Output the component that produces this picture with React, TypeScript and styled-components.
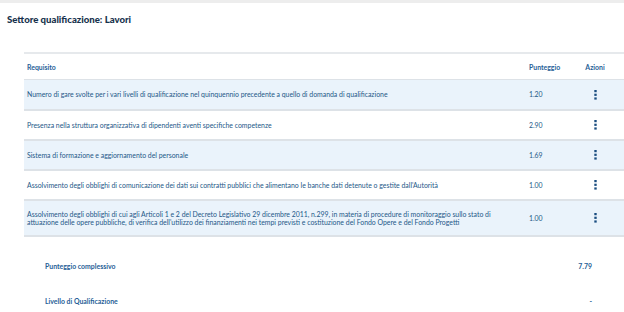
import styled, { createGlobalStyle } from 'styled-components'

const GlobalStyle = createGlobalStyle`
  html, body {
    margin: 0;
    padding: 0;
    background: #ffffff;
  }
  body {
    font-family: Lato, 'Open Sans', sans-serif;
  }
`

const Page = styled.div`
  width: 624px;
  height: 312px;
  overflow: hidden;
  border-top: 3px solid #ededed;
  box-sizing: border-box;
`

const Title = styled.h1`
  margin: 0;
  padding: 10px 0 0 7px;
  font-size: 9.6px;
  line-height: 13px;
  font-weight: 900;
  color: #17324d;
`

const TableWrap = styled.div`
  margin: 26px 0 0 24px;
`

const Table = styled.table`
  width: 100%;
  border-collapse: collapse;
  border-top: 2px solid #e6e9ec;
  font-size: 6.9px;
`

const HeadCell = styled.th<{ $align?: 'left' | 'center' }>`
  height: 25px;
  padding: 0 3px;
  text-align: ${(p) => p.$align ?? 'left'};
  font-weight: 700;
  color: #1f5e96;
  border-bottom: 1px solid #dde2e7;
`

const Row = styled.tr<{ $shaded: boolean }>`
  background: ${(p) => (p.$shaded ? '#eaf3fb' : '#ffffff')};
  border-bottom: 2px solid #dde2e7;
`

const Cell = styled.td<{ $height: number }>`
  height: ${(p) => p.$height}px;
  padding: 0 3px;
  color: #245888;
  line-height: 8.5px;
`

const ScoreCell = styled(Cell)`
  width: 34px;
`

const ActionCell = styled(Cell)`
  width: 52px;
  text-align: center;
`

const Kebab = () => (
  <svg width="3" height="10" viewBox="0 0 3 10" style={{ display: 'block', margin: '0 auto' }}>
    <rect x="0.3" y="0" width="2.4" height="2.2" fill="#1a4d80" />
    <rect x="0.3" y="3.7" width="2.4" height="2.2" fill="#1a4d80" />
    <rect x="0.3" y="7.4" width="2.4" height="2.2" fill="#1a4d80" />
  </svg>
)

const Summary = styled.div`
  margin: 25px 32px 0 45px;
  display: flex;
  flex-direction: column;
  gap: 27px;
`

const SummaryRow = styled.div`
  display: flex;
  justify-content: space-between;
  font-size: 6.9px;
  font-weight: 700;
  color: #1f5e96;
`

const rows = [
  {
    text: 'Numero di gare svolte per i vari livelli di qualificazione nel quinquennio precedente a quello di domanda di qualificazione',
    score: '1.20',
    height: 29,
  },
  {
    text: 'Presenza nella struttura organizzativa di dipendenti aventi specifiche competenze',
    score: '2.90',
    height: 28,
  },
  {
    text: 'Sistema di formazione e aggiornamento del personale',
    score: '1.69',
    height: 28,
  },
  {
    text: "Assolvimento degli obblighi di comunicazione dei dati sui contratti pubblici che alimentano le banche dati detenute o gestite dall'Autorità",
    score: '1.00',
    height: 28,
  },
  {
    text: "Assolvimento degli obblighi di cui agli Articoli 1 e 2 del Decreto Legislativo 29 dicembre 2011, n.299, in materia di procedure di monitoraggio sullo stato di attuazione delle opere pubbliche, di verifica dell'utilizzo dei finanziamenti nei tempi previsti e costituzione del Fondo Opere e del Fondo Progetti",
    score: '1.00',
    height: 34,
  },
]

export default function App() {
  return (
    <>
      <GlobalStyle />
      <Page>
        <Title>Settore qualificazione: Lavori</Title>
        <TableWrap>
          <Table>
            <thead>
              <tr>
                <HeadCell>Requisito</HeadCell>
                <HeadCell>Punteggio</HeadCell>
                <HeadCell $align="center">Azioni</HeadCell>
              </tr>
            </thead>
            <tbody>
              {rows.map((row, i) => (
                <Row key={i} $shaded={i % 2 === 0}>
                  <Cell $height={row.height}>{row.text}</Cell>
                  <ScoreCell $height={row.height}>{row.score}</ScoreCell>
                  <ActionCell $height={row.height}>
                    <Kebab />
                  </ActionCell>
                </Row>
              ))}
            </tbody>
          </Table>
        </TableWrap>
        <Summary>
          <SummaryRow>
            <span>Punteggio complessivo</span>
            <span>7.79</span>
          </SummaryRow>
          <SummaryRow>
            <span>Livello di Qualificazione</span>
            <span>-</span>
          </SummaryRow>
        </Summary>
      </Page>
    </>
  )
}
